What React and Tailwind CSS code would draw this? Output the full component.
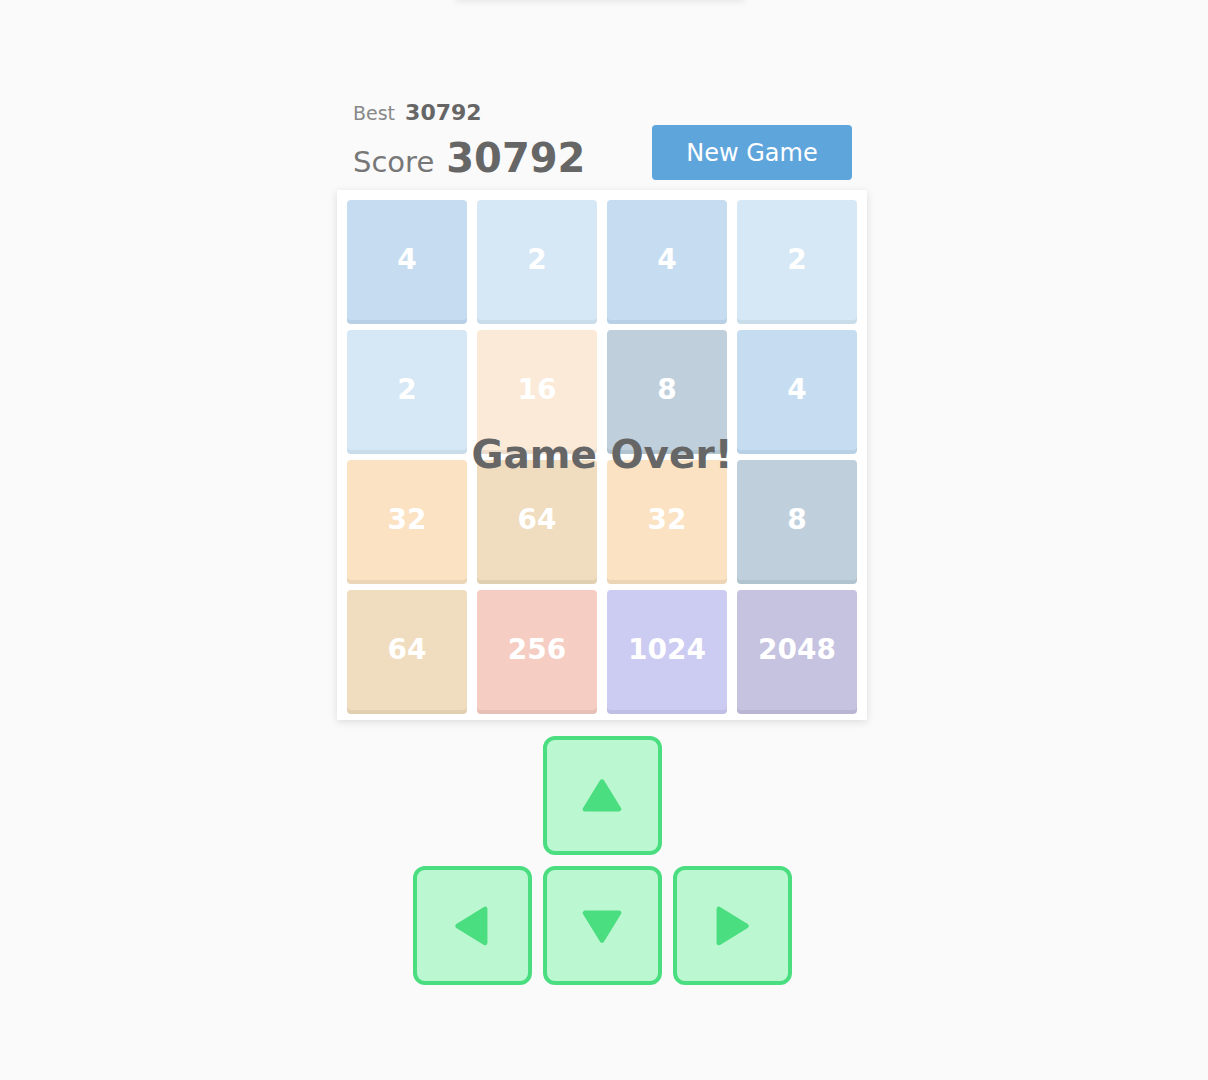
import React from 'react';

const tiles = [
  [4, 2, 4, 2],
  [2, 16, 8, 4],
  [32, 64, 32, 8],
  [64, 256, 1024, 2048],
];

const tileStyle = {
  2: 'bg-[#d6e8f5] shadow-[0_4px_0_#c9dcea]',
  4: 'bg-[#c6ddf1] shadow-[0_4px_0_#b8d0e5]',
  8: 'bg-[#bfd0dc] shadow-[0_4px_0_#b1c3cf]',
  16: 'bg-[#fbead8] shadow-[0_4px_0_#ecdccb]',
  32: 'bg-[#fbe2c3] shadow-[0_4px_0_#ecd4b6]',
  64: 'bg-[#f0dcbe] shadow-[0_4px_0_#e1cfb2]',
  256: 'bg-[#f5cdc3] shadow-[0_4px_0_#e6c0b7]',
  1024: 'bg-[#cccbf2] shadow-[0_4px_0_#bfbee3]',
  2048: 'bg-[#c5c3e0] shadow-[0_4px_0_#b8b6d2]',
};

function Arrow({ dir }) {
  const paths = {
    up: 'M16 5 L29 26 L3 26 Z',
    down: 'M3 6 L29 6 L16 27 Z',
    left: 'M5 16 L26 3 L26 29 Z',
    right: 'M27 16 L6 3 L6 29 Z',
  };
  return (
    <svg width="42" height="42" viewBox="0 0 32 32">
      <path d={paths[dir]} fill="#4ade80" stroke="#4ade80" strokeWidth="3.5" strokeLinejoin="round" />
    </svg>
  );
}

function Key({ dir }) {
  return (
    <button className="w-[119px] h-[119px] rounded-xl border-4 border-[#4ade80] bg-[#bbf7d0] flex items-center justify-center">
      <Arrow dir={dir} />
    </button>
  );
}

export default function App() {
  return (
    <div className="relative min-h-screen w-full bg-[#fafafa] flex flex-col items-center pt-[102px] pr-[4px] overflow-hidden" style={{ fontFamily: '"DejaVu Sans", "Noto Sans", sans-serif' }}>
      <div className="absolute top-[-100px] left-[455px] w-[290px] h-[100px] bg-[#fafafa] shadow-[0_2px_6px_rgba(0,0,0,0.08)]" />

      <div className="w-[530px] flex items-end justify-between pl-4 pr-[15px]">
        <div className="flex flex-col pb-[12px]">
          <div className="flex items-baseline gap-[10px] leading-none">
            <span className="text-[19px] text-[#888]">Best</span>
            <span className="text-[22px] font-bold text-[#666]">30792</span>
          </div>
          <div className="flex items-baseline gap-[12px] leading-none mt-[14px]">
            <span className="text-[29px] text-[#777]">Score</span>
            <span className="text-[40px] font-bold text-[#666]">30792</span>
          </div>
        </div>
        <button className="w-[200px] h-[55px] mb-[10px] rounded bg-[#5ea5dc] text-white text-[24px]">
          New Game
        </button>
      </div>

      <div className="relative w-[530px] h-[530px] bg-white p-[10px] shadow-[0_2px_8px_rgba(0,0,0,0.12)] grid grid-cols-4 gap-[10px]">
        {tiles.flat().map((v, i) => (
          <div
            key={i}
            className={`w-[120px] h-[120px] rounded-[4px] flex items-center justify-center text-white text-[28px] font-bold ${tileStyle[v]}`}
          >
            {v}
          </div>
        ))}
        <div className="absolute inset-0 flex items-center justify-center">
          <span className="text-[39px] font-bold text-[#666]">Game Over!</span>
        </div>
      </div>

      <div className="mt-[16px] flex flex-col items-center gap-[11px]">
        <Key dir="up" />
        <div className="flex gap-[11px]">
          <Key dir="left" />
          <Key dir="down" />
          <Key dir="right" />
        </div>
      </div>
    </div>
  );
}
